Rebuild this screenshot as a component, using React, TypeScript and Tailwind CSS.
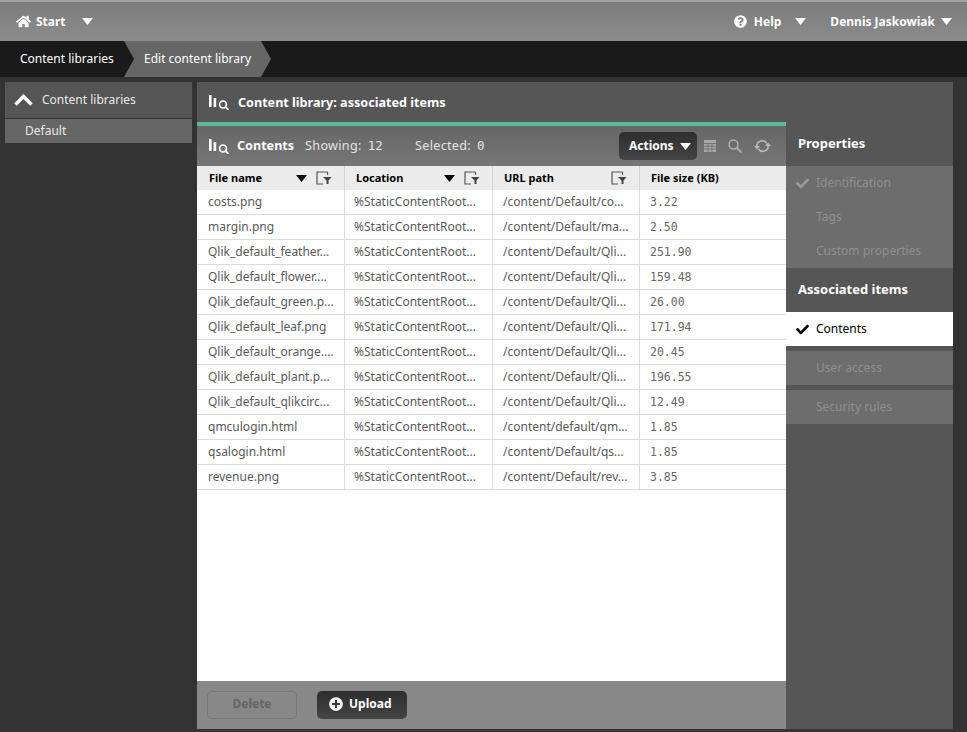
import React from 'react';
import { FaHome, FaQuestionCircle, FaCheck, FaPlusCircle } from 'react-icons/fa';

const rows = [
  ['costs.png', '/content/Default/co...', '3.22'],
  ['margin.png', '/content/Default/ma...', '2.50'],
  ['Qlik_default_feather...', '/content/Default/Qli...', '251.90'],
  ['Qlik_default_flower....', '/content/Default/Qli...', '159.48'],
  ['Qlik_default_green.p...', '/content/Default/Qli...', '26.00'],
  ['Qlik_default_leaf.png', '/content/Default/Qli...', '171.94'],
  ['Qlik_default_orange....', '/content/Default/Qli...', '20.45'],
  ['Qlik_default_plant.p...', '/content/Default/Qli...', '196.55'],
  ['Qlik_default_qlikcirc...', '/content/Default/Qli...', '12.49'],
  ['qmculogin.html', '/content/default/qm...', '1.85'],
  ['qsalogin.html', '/content/Default/qs...', '1.85'],
  ['revenue.png', '/content/Default/rev...', '3.85'],
];

const Caret: React.FC<{ className?: string }> = ({ className }) => (
  <svg width="11" height="7" viewBox="0 0 11 7" className={className} fill="currentColor">
    <path d="M0 0h11L5.5 7z" />
  </svg>
);

const StreamIcon = () => (
  <svg width="21" height="16" viewBox="0 0 21 16" fill="none" className="shrink-0">
    <rect x="0" y="1" width="2.6" height="12" fill="white" />
    <rect x="4.6" y="4" width="2.6" height="9" fill="white" />
    <circle cx="14" cy="10.4" r="3.4" stroke="white" strokeWidth="1.7" />
    <path d="M16.4 12.8l3 3" stroke="white" strokeWidth="1.8" />
  </svg>
);

const FilterIcon = () => (
  <svg width="16" height="14" viewBox="0 0 16 14" fill="none">
    <path d="M11.5 1H1v12h6M11.5 1v3" stroke="#555" strokeWidth="1.2" />
    <path d="M7 6h8.5l-3 3.4V13h-2V9.4z" fill="#444" />
  </svg>
);

const TableIcon = () => (
  <svg width="12" height="12" viewBox="0 0 12 12" fill="none">
    <rect x="0" y="0" width="12" height="12" fill="#a8a8a8" />
    <path d="M0 3.5h12M0 6.2h12M0 9h12M4 3v9M8 3v9" stroke="#707070" strokeWidth="0.9" />
  </svg>
);

const SearchIcon = () => (
  <svg width="14" height="14" viewBox="0 0 14 14" fill="none">
    <circle cx="5.5" cy="5.5" r="4.5" stroke="#b0b0b0" strokeWidth="1.4" />
    <path d="M9 9l4.5 4.5" stroke="#b0b0b0" strokeWidth="1.8" />
  </svg>
);

const ReloadIcon = () => (
  <svg width="17" height="14" viewBox="0 0 17 14" fill="none">
    <path d="M2.8 7a5.4 5.4 0 0 1 9.8-3" stroke="#b8b8b8" strokeWidth="1.6" />
    <path d="M14.2 7a5.4 5.4 0 0 1-9.8 3" stroke="#b8b8b8" strokeWidth="1.6" />
    <path d="M11 7h6l-3-3.5zM0 7h6l-3 3.5z" fill="#b8b8b8" />
  </svg>
);

const HeaderCell: React.FC<{ label: string; sort?: boolean; filter?: boolean; width: string; pad: string }> = ({ label, sort, filter, width, pad }) => (
  <div className={`${width} ${pad} h-full flex items-center pr-[12px] border-r border-[#d4d4d4] font-bold text-[11px] text-black shrink-0`}>
    <span className="flex-1">{label}</span>
    {sort && <Caret className="text-black mr-[9px]" />}
    {filter && <FilterIcon />}
  </div>
);

const SideItem: React.FC<{ label: string; check?: boolean; active?: boolean }> = ({ label, check, active }) => (
  <div className={`h-[34px] flex items-center text-[12px] ${active ? 'bg-white text-black' : 'text-[#8f8f8f]'}`}>
    <span className="w-[30px] flex justify-end pr-[7px]">
      {check && <FaCheck size={13} className={active ? 'text-black' : 'text-[#9a9a9a]'} />}
    </span>
    {label}
  </div>
);

export default function App() {
  return (
    <div className="w-[967px] h-[732px] overflow-hidden flex flex-col bg-[#333333] font-['Noto_Sans',sans-serif] text-white">
      {/* top bar */}
      <div className="h-[41px] shrink-0 border-t-2 border-[#a0a0a0] bg-gradient-to-b from-[#7c7c7c] to-[#8c8c8c] flex items-center pl-[16px] pr-[15px] text-[12px] font-bold">
        <FaHome size={15} className="mr-[5px]" />
        <span>Start</span>
        <Caret className="ml-[16px]" />
        <div className="flex-1" />
        <FaQuestionCircle size={13} className="mr-[7px]" />
        <span>Help</span>
        <Caret className="ml-[14px] mr-[24px]" />
        <span>Dennis Jaskowiak</span>
        <Caret className="ml-[6px]" />
      </div>

      {/* breadcrumb */}
      <div className="h-[36px] shrink-0 bg-[#1a1a1a] flex items-center text-[12px]">
        <span className="pl-[20px] w-[124px] shrink-0">Content libraries</span>
        <div className="w-[147px] h-full bg-[#666666] flex items-center pl-[20px] [clip-path:polygon(0_0,137px_0,100%_50%,137px_100%,0_100%,10px_50%)]">
          Edit content library
        </div>
      </div>

      <div className="flex-1 flex pt-[5px] pb-[3px] pl-[5px] pr-[14px] gap-[5px] min-h-0">
        {/* left */}
        <div className="w-[187px] shrink-0">
          <div className="h-[36px] bg-[#555555] flex items-center pl-[9px] text-[12px] text-[#e8e8e8]">
            <svg width="19" height="12" viewBox="0 0 19 12" fill="none" className="mr-[9px]">
              <path d="M1.5 10.5L9.5 2.5l8 8" stroke="white" strokeWidth="3.4" />
            </svg>
            Content libraries
          </div>
          <div className="mt-px h-[24px] bg-[#666666] flex items-center pl-[20px] text-[12px] text-[#e8e8e8]">
            Default
          </div>
        </div>

        {/* main */}
        <div className="flex-1 flex flex-col min-w-0 bg-[#565656]">
          <div className="h-[40px] shrink-0 flex items-center pl-[12px] font-bold text-[12.6px]">
            <StreamIcon />
            <span className="ml-[8px] pt-[2px]">Content library: associated items</span>
          </div>
          <div className="flex-1 flex min-h-0">
            <div className="w-[589px] shrink-0 flex flex-col border-t-4 border-[#5bb899]">
              {/* toolbar */}
              <div className="h-[40px] shrink-0 bg-gradient-to-b from-[#666666] to-[#777777] flex items-center pl-[12px] pr-[15px] text-[12.6px]">
                <StreamIcon />
                <span className="ml-[7px] font-bold">Contents</span>
                <span className="ml-[11px] w-[110px] text-[#e4e4e4] tracking-[0.3px] flex items-center gap-[6px]">
                  Showing:
                  <span className="font-['DejaVu_Sans_Mono',monospace] tracking-normal text-[12.5px]">12</span>
                </span>
                <span className="text-[#e4e4e4] tracking-[0.3px] flex items-center gap-[6px]">
                  Selected:
                  <span className="font-['DejaVu_Sans_Mono',monospace] tracking-normal text-[12.5px]">0</span>
                </span>
                <div className="flex-1" />
                <button className="h-[28px] w-[78px] rounded-[5px] bg-gradient-to-b from-[#2e2e2e] to-[#444444] flex items-center pl-[10px] gap-[6px] font-bold text-[12px] mr-[7px]">
                  Actions
                  <Caret />
                </button>
                <TableIcon />
                <span className="ml-[12px]"><SearchIcon /></span>
                <span className="ml-[12px]"><ReloadIcon /></span>
              </div>

              {/* table */}
              <div className="flex-1 bg-white min-h-0">
                <div className="h-[24px] bg-[#ececec] flex items-center">
                  <HeaderCell label="File name" sort filter width="w-[148px]" pad="pl-[12px]" />
                  <HeaderCell label="Location" sort filter width="w-[148px]" pad="pl-[11px]" />
                  <HeaderCell label="URL path" filter width="w-[147px]" pad="pl-[11px]" />
                  <div className="flex-1 pl-[11px] font-bold text-[11px] text-black">File size (KB)</div>
                </div>
                {rows.map((r) => (
                  <div key={r[0]} className="h-[25px] flex items-center border-b border-[#dcdcdc] text-[12px] text-[#595959]">
                    <div className="w-[148px] h-full flex items-center pl-[11px] border-r border-[#dcdcdc] shrink-0">{r[0]}</div>
                    <div className="w-[148px] h-full flex items-center pl-[9px] border-r border-[#dcdcdc] shrink-0">%StaticContentRoot...</div>
                    <div className="w-[147px] h-full flex items-center pl-[10px] border-r border-[#dcdcdc] shrink-0">{r[1]}</div>
                    <div className="flex-1 pl-[10px] pt-[1px] font-['DejaVu_Sans_Mono',monospace] text-[11.5px] text-[#666666]">{r[2]}</div>
                  </div>
                ))}
              </div>

              {/* footer */}
              <div className="h-[48px] shrink-0 bg-[#888888] flex items-center pl-[10px] gap-[20px] text-[12px] font-bold pb-[1px]">
                <button className="w-[90px] h-[28px] rounded-[5px] border border-[#777777] text-[#666666] pb-[1px]">Delete</button>
                <button className="w-[90px] h-[28px] rounded-[5px] bg-gradient-to-b from-[#2e2e2e] to-[#444444] flex items-center pl-[12px] gap-[6px] pb-[1px]">
                  <FaPlusCircle size={14} />
                  Upload
                </button>
              </div>
            </div>

            {/* right */}
            <div className="flex-1 min-w-0">
              <div className="h-[44px] flex items-center pl-[12px] font-bold text-[13px]">Properties</div>
              <div className="bg-[#6d6d6d]">
                <SideItem label="Identification" check />
                <SideItem label="Tags" />
                <SideItem label="Custom properties" />
              </div>
              <div className="h-[44px] flex items-center pl-[12px] font-bold text-[13px]">Associated items</div>
              <SideItem label="Contents" check active />
              <div className="mt-[5px] bg-[#6d6d6d]"><SideItem label="User access" /></div>
              <div className="mt-[5px] bg-[#6d6d6d]"><SideItem label="Security rules" /></div>
            </div>
          </div>
        </div>
      </div>
    </div>
  );
}
